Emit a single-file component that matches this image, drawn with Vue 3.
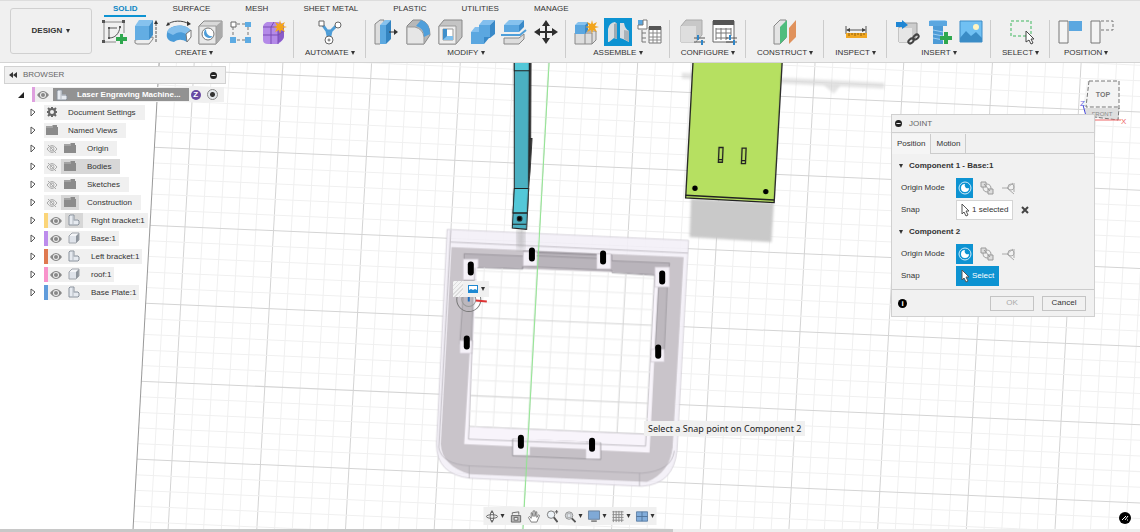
<template>
  <div class="app">
    <!-- icon sprite -->
    <svg class="sprite" aria-hidden="true">
      <symbol id="i-sketch" viewBox="0 0 28 28">
        <g fill="none" stroke="#888"><path d="M4 4H24V15M4 4V24H16" /><path d="M9 20V10h8M9 20c6 0 10-4 11-11" stroke="#555" /></g>
        <path d="M2 2h3v3h-3zM22 2h3v3h-3zM2 22h3v3h-3zM8 9h2v2h-2zM19 8h2v2h-2zM8 19h2v2h-2z" fill="#555" />
        <path d="M20 16h3v3h4v4h-4v3h-3v-3h-4v-4h4z" fill="#2fa84f" />
      </symbol>
      <symbol id="i-extrude" viewBox="0 0 28 28">
        <path d="M3 22v3l2 1h12l4-5v-2z" fill="#eee" stroke="#888" />
        <path d="M3 8h14v14h-14z" fill="#63ade3" /><path d="M3 8l4-6h14l-4 6z" fill="#86c2ee" /><path d="M17 8l4-6v15l-4 5z" fill="#3f8fca" />
        <path d="M24 24V5" stroke="#555" stroke-dasharray="3 1" /><path d="M22 6l2-4 2 4z" fill="#333" />
      </symbol>
      <symbol id="i-revolve" viewBox="0 0 28 28">
        <path d="M3 15C4 7 21 4 27 13l-4 11c-5-3-9-3-13 0C4 23 2 20 3 15z" fill="#4a9bd8" />
        <path d="M3 14C5 7 21 5 27 12l-5 4c-5-3-9-2-13 1z" fill="#83bfec" />
        <path d="M22 16l5-4v7l-4 5z" fill="#fff" stroke="#777" />
        <path d="M3 7C8 2 19 2 25 6" fill="none" stroke="#444" /><path d="M2 8l2-4 2 3zM23 3l4 3-4 2z" fill="#333" />
      </symbol>
      <symbol id="i-hole" viewBox="0 0 28 28">
        <path d="M3 8l5-5h18v16l-6 7H3z" fill="#d9d9d9" stroke="#888" /><path d="M20 8l6-5v16l-6 7z" fill="#aaa" />
        <path d="M3 8h17v18H3z" fill="#e8e8e8" stroke="#999" />
        <circle cx="12" cy="16" r="6" fill="#fff" stroke="#777" /><path d="M10 11a5 5 0 1 0 7 7c-4 1-7-2-7-7z" fill="#4c9cd8" />
      </symbol>
      <symbol id="i-pattern" viewBox="0 0 28 28">
        <path d="M9 6h8M5 9v9M9 22h8M20 9v9" stroke="#777" stroke-dasharray="3 2" />
        <path d="M3 4h5v5H3z" fill="#fff" stroke="#666" /><path d="M17 4h6v5h-6zM2 19h6v6H2zM17 19h6v6h-6z" fill="#5dabe3" />
      </symbol>
      <symbol id="i-form" viewBox="0 0 28 28">
        <path d="M3 9q0-3 4-5h10q6 0 7 5v9q0 4-6 8H8q-5 0-5-4z" fill="#b48ae8" />
        <path d="M18 10l6-3v11q0 4-6 7z" fill="#8a5cc9" />
        <path d="M11 9v17M3 17h15l6-4M3 9h15v17M11 9l3-5" stroke="#7a4db5" fill="none" />
        <use href="#i-star" />
      </symbol>
      <symbol id="i-star" viewBox="0 0 28 28"><path d="M20 2l1 4 4-2-2 4 4 1-4 1 2 4-4-2-1 4-1-4-4 2 2-4-4-1 4-1-2-4 4 2z" fill="#f2a51c" /></symbol>
      <symbol id="i-automate" viewBox="0 0 28 28">
        <path d="M6 6l5 7h4l6-6M11 13l2 9 2-9" fill="none" stroke="#4d9cd6" stroke-width="3" stroke-linejoin="round" />
        <path d="M3 3h5v5H3z" fill="#fff" stroke="#666" /><circle cx="22" cy="7" r="3" fill="#fff" stroke="#666" /><circle cx="13" cy="22" r="4" fill="#fff" stroke="#666" /><circle cx="13" cy="22" r="1" stroke="#666" fill="none" />
      </symbol>
      <symbol id="i-press" viewBox="0 0 28 28">
        <path d="M3 6l5-4h4v20l-4 4H3z" fill="#ddd" stroke="#888" /><path d="M8 7h6v19H8z" fill="#5ba8e0" /><path d="M8 7l5-5h6l-5 5z" fill="#86c2ee" /><path d="M14 7l5-5v19l-5 5z" fill="#3484c1" />
        <path d="M17 14h6" stroke="#333" /><path d="M22 11l4 3-4 3z" fill="#333" />
      </symbol>
      <symbol id="i-fillet" viewBox="0 0 28 28">
        <path d="M3 8l6-6h8q9 3 9 15l-6 9H3z" fill="#b8b8b8" stroke="#888" /><path d="M3 9h8q8 2 9 10v7H3z" fill="#e6e6e6" stroke="#999" />
        <path d="M12 8l5-6q9 3 9 14l-6 3Q20 10 12 8z" fill="#4f9fdb" />
      </symbol>
      <symbol id="i-shell" viewBox="0 0 28 28">
        <path d="M3 8l5-6h18v17l-6 7H3z" fill="#c4c4c4" stroke="#888" /><path d="M3 8h17v18H3z" fill="#eee" stroke="#999" />
        <path d="M7 11h10v11H7z" fill="#fff" stroke="#999" /><path d="M7 11h4v8l-4 3z" fill="#3f8fcb" /><path d="M7 22l4-4h6v4z" fill="#7fc0ee" />
      </symbol>
      <symbol id="i-combine" viewBox="0 0 28 28">
        <path d="M3 14h8V7h11v12h-6v7H3z" fill="#5ba7e0" /><path d="M3 14l4-5h4v5zM11 7l4-5h12l-5 5z" fill="#83bfee" /><path d="M22 7l5-5v14l-5 4h-1l-5 6v-7h6z" fill="#3989c8" />
      </symbol>
      <symbol id="i-split" viewBox="0 0 28 28">
        <path d="M4 7h15v7H4z" fill="#5ba7e0" /><path d="M4 7l5-5h15l-5 5z" fill="#86c2ee" /><path d="M19 7l5-5v7l-5 5z" fill="#3989c8" />
        <path d="M1 17h19l6-5" fill="none" stroke="#4f9fd9" stroke-width="2" /><path d="M4 20h15l5-4v5l-5 5H4z" fill="#ddd" stroke="#888" />
      </symbol>
      <symbol id="i-move" viewBox="0 0 28 28"><path d="M14 2l4 6h-3v5h5v-3l6 4-6 4v-3h-5v5h3l-4 6-4-6h3v-5H8v3l-6-4 6-4v3h5V8h-3z" fill="#2e2e2e" /></symbol>
      <symbol id="i-newcomp" viewBox="0 0 28 28">
        <path d="M3 15l3-2h18v9l-4 4H3z" fill="#ddd" stroke="#888" /><path d="M13 15v11M3 15h17v11" stroke="#888" fill="none" />
        <path d="M3 7h10v9H3z" fill="#5ba7e0" /><path d="M3 7l3-3h10l-3 3z" fill="#86c2ee" /><path d="M13 7l3-3v8l-3 4z" fill="#3989c8" /><use href="#i-star" />
      </symbol>
      <symbol id="i-joint" viewBox="0 0 28 28">
        <path d="M4 11q1-6 7-7l2 2v15l-3-1-5 4H4z" fill="#d9dde0" /><path d="M10 6l3-1v16l-3-1z" fill="#9eaab2" /><path d="M16 5l4 0q1 6 5 8v11l-6-3-3-1z" fill="#d9dde0" /><path d="M20 12l5 1v11l-5-3z" fill="#aab3b9" />
      </symbol>
      <symbol id="i-asbuilt" viewBox="0 0 28 28">
        <path d="M2 2h5v5H2z" fill="#5ba7e0" /><path d="M7 2h4v9H2V7h5z" fill="#fff" stroke="#777" /><path d="M6 12v12M6 15h4M6 20h4M6 24h4" stroke="#777" fill="none" />
        <path d="M13 9h12v16H13z" fill="#fff" stroke="#777" /><path d="M13 8h12v4H13z" fill="#555" /><path d="M13 15h12M13 19h12M13 22h12M17 12v13M21 12v13" stroke="#888" />
      </symbol>
      <symbol id="i-config" viewBox="0 0 28 28">
        <path d="M3 8l5-6h16v15l-6 7H3z" fill="#c8c8c8" stroke="#aaa" /><path d="M3 8h15v16H3z" fill="#dedede" /><use href="#i-sliders" />
      </symbol>
      <symbol id="i-sliders" viewBox="0 0 28 28"><path d="M16 20h11M16 24h11" stroke="#555" /><path d="M20 17v5M24 22v5" stroke="#2f86c8" stroke-width="2" /></symbol>
      <symbol id="i-table" viewBox="0 0 28 28">
        <path d="M3 3h21v21H3z" fill="#fff" stroke="#666" /><path d="M3 2h21v5H3z" fill="#555" /><path d="M6 11h15M6 15h15M6 20h12M6 10v12M11 10v12M16 10v12M21 10v8" stroke="#777" /><use href="#i-sliders" />
      </symbol>
      <symbol id="i-construct" viewBox="0 0 28 28">
        <path d="M3 8l6-6h6v18l-6 6H3z" fill="#e4e4e4" stroke="#888" /><path d="M9 9l7-7v17l-7 7z" fill="#50bd7d" /><path d="M18 10l7-8v17l-7 7z" fill="#e0925c" />
      </symbol>
      <symbol id="i-inspect" viewBox="0 0 28 28">
        <path d="M4 8v8M24 8v8M5 12h18" stroke="#555" /><path d="M4 12l4-2v4zM24 12l-4-2v4z" fill="#444" /><path d="M4 15h21v5H4z" fill="#f1a722" /><path d="M7 15v3M10 15v2M13 15v3M16 15v2M19 15v3M22 15v2" stroke="#8d5e0c" />
      </symbol>
      <symbol id="i-insert" viewBox="0 0 28 28">
        <path d="M6 9l5-4h13v12l-5 7H6z" fill="#ccc" stroke="#999" /><path d="M6 10h13v14H6z" fill="#e6e6e6" /><path d="M3 4h6V2l6 5-6 4V9H3z" fill="#1f86d4" />
        <g fill="none" stroke="#444" stroke-width="2"><ellipse cx="18" cy="23" rx="3" ry="2" transform="rotate(-40 18 23)" /><ellipse cx="23" cy="19" rx="3" ry="2" transform="rotate(-40 23 19)" /></g>
      </symbol>
      <symbol id="i-fastener" viewBox="0 0 28 28">
        <path d="M4 3h18v5H4z" fill="#5ba7e0" /><path d="M4 3l2-1h14l2 1z" fill="#9ccdf2" /><path d="M8 8h10v18H8z" fill="#4d9bd6" /><path d="M8 12l10 2M8 16l10 2M8 20l10 2" stroke="#9ccdf2" /><path d="M19 14h4v4h4v4h-4v4h-4v-4h-4v-4h4z" fill="#2fa84f" />
      </symbol>
      <symbol id="i-image" viewBox="0 0 28 28">
        <path d="M3 3h22v21H3z" fill="#70c0f3" stroke="#3d8cc7" /><path d="M3 20l6-7 5 5 5-4 6 6v4H3z" fill="#3a8cc6" /><circle cx="19" cy="9" r="3" fill="#fff4c2" />
      </symbol>
      <symbol id="i-select" viewBox="0 0 28 28">
        <path d="M4 3h20v15H4z" fill="none" stroke="#3fb75f" stroke-dasharray="3 2" /><path d="M19 13v11l3-2 2 4 2-1-2-4h3z" fill="#fff" stroke="#444" />
      </symbol>
      <symbol id="i-capture" viewBox="0 0 28 28"><path d="M13 3h13v10H13z" fill="#5ba7e0" /><path d="M3 3h9v22H3z" fill="#f4f4f4" stroke="#777" /></symbol>
      <symbol id="i-revert" viewBox="0 0 28 28"><path d="M13 3h12v9H13" fill="none" stroke="#777" stroke-dasharray="3 2" /><path d="M3 3h9v22H3z" fill="#f4f4f4" stroke="#777" /></symbol>

      <symbol id="i-eye" viewBox="0 0 12 12"><path d="M0 6q6-8 12 0-6 8-12 0z" fill="#888" /><circle cx="6" cy="6" r="3" fill="#eee" /><circle cx="6" cy="6" r="2" fill="#888" /></symbol>
      <symbol id="i-hidden" viewBox="0 0 12 12"><g fill="none" stroke="#aaa"><path d="M1 6q5-7 10 0-5 7-10 0z" /><circle cx="6" cy="6" r="2" /><path d="M2 2l8 8" /></g></symbol>
      <symbol id="i-folder" viewBox="0 0 12 12"><path d="M0 2h6l1-1h4v2h1v8H0z" fill="#8b8b8b" /><path d="M0 3h7" stroke="#bbb" /></symbol>
      <symbol id="i-gear" viewBox="0 0 12 12"><circle cx="6" cy="6" r="3" fill="none" stroke="#666" stroke-width="2" /><path d="M6 1v2M6 9v2M1 6h2M9 6h2M2 2l2 2M8 8l2 2M10 2l-2 2M2 10l2-2" stroke="#666" stroke-width="2" /></symbol>
      <symbol id="i-comp" viewBox="0 0 12 12"><path d="M1 2l1-1h4v5h4l1 1v3l-1 1H1z" fill="#e6eaf0" stroke="#8a929c" /><path d="M5 2v9M5 6h5" stroke="#b4bac2" /></symbol>
      <symbol id="i-body" viewBox="0 0 12 12"><path d="M1 4l3-3h7v7l-3 3H1z" fill="#8f969e" /><path d="M1 4h7v7H1z" fill="#dfe3ea" /><path d="M1 4l3-3h7L8 4z" fill="#f4f5f8" /><path d="M1 4l3-3h7v7l-3 3H1z" fill="none" stroke="#a0a5ac" /></symbol>

      <symbol id="i-simple" viewBox="0 0 14 14"><circle cx="7" cy="7" r="6" fill="none" stroke="#cdeafa" /><path d="M7 3a4 4 0 1 0 4 4 3 3 0 0 1-4-4z" fill="#fff" /></symbol>
      <symbol id="i-between" viewBox="0 0 14 14"><g stroke="#999" fill="#ddd"><path d="M1 1h5v5H1zM8 8h5v5H8z" /><path d="M6 3c4 0 5 2 5 5M3 6c0 4 2 5 5 5M4 3l6 7" fill="none" /></g></symbol>
      <symbol id="i-twoedge" viewBox="0 0 14 14"><g stroke="#aaa" fill="none"><path d="M0 7h5l6-5M5 7l7 6M12 2v9" /><circle cx="9" cy="6" r="3" /></g></symbol>
      <symbol id="i-cursor" viewBox="0 0 14 14"><path d="M4 1v10l2-2 2 4 2-1-2-4h3z" fill="#fff" stroke="#555" /></symbol>

      <symbol id="i-orbit" viewBox="0 0 14 14"><g fill="none" stroke="#666"><ellipse cx="7" cy="7" rx="6" ry="2" /><ellipse cx="7" cy="7" rx="2" ry="5" /></g><path d="M5 3l2-3 2 3zM5 11l2 3 2-3z" fill="#666" /></symbol>
      <symbol id="i-look" viewBox="0 0 14 14"><path d="M2 6h10v7H2z" fill="#bbb" stroke="#666" /><path d="M3 5V3l7-1v3M5 8h4v3H5z" fill="#eee" stroke="#666" /></symbol>
      <symbol id="i-pan" viewBox="0 0 14 14"><path d="M4 13L1 8l1-1 2 2V3h1l1 4V1h2v6l1-5h1v6l2-3 1 1-3 7z" fill="#fff" stroke="#777" /></symbol>
      <symbol id="i-zoom" viewBox="0 0 14 14"><circle cx="6" cy="5" r="4" fill="#edf3f8" stroke="#777" /><path d="M9 8l4 5" stroke="#555" stroke-width="2" /><path d="M10 2h4M12 0v4" stroke="#555" /></symbol>
      <symbol id="i-zoomwin" viewBox="0 0 14 14"><circle cx="6" cy="6" r="4" fill="#e3e9ee" stroke="#888" /><path d="M4 4h4v4H4z" fill="none" stroke="#aaa" /><path d="M9 9l4 4" stroke="#555" stroke-width="2" /></symbol>
      <symbol id="i-display" viewBox="0 0 14 14"><path d="M1 1h12v9H1z" fill="#7fa9d6" stroke="#687f9b" /><path d="M4 11h6v2H4z" fill="#888" /></symbol>
      <symbol id="i-grid" viewBox="0 0 14 14"><path d="M1 2h12M1 5h12M1 8h12M1 11h12M2 1v12M5 1v12M8 1v12M11 1v12" stroke="#888" /></symbol>
      <symbol id="i-views" viewBox="0 0 14 14"><path d="M1 2h12v10H1z" fill="#82addb" stroke="#5d7fa5" /><path d="M7 2v10M1 7h12" stroke="#4f7298" /></symbol>
    </svg>

    <header class="ribbon">
      <button class="workspace">DESIGN <i class="caret"></i></button>
      <div class="ribbon-main">
        <nav class="tabs">
          <button v-for="tab in tabs" :key="tab" class="tab" :class="{ active: tab === activeTab }" @click="activeTab = tab">{{ tab }}</button>
        </nav>
        <div class="groups">
          <div v-for="group in groups" :key="group.label" class="group" :class="'count-' + group.icons.length">
            <div class="tools">
              <button v-for="icon in group.icons" :key="icon" class="tool" :class="{ active: icon === 'joint' }" :aria-label="icon">
                <svg><use :href="'#i-' + icon" /></svg>
              </button>
            </div>
            <button class="group-label">{{ group.label }} <i class="caret"></i></button>
          </div>
        </div>
      </div>
    </header>

    <main class="canvas">
      <svg class="scene" viewBox="0 63 1140 465" preserveAspectRatio="xMidYMin slice">
        <defs>
          <clipPath id="floor"><path d="M160 63H1140V528H134z" /></clipPath>
          <clipPath id="hole"><path d="M477 267L523 269 612 272 654 275 647 433 469 426z" /></clipPath>
          <filter id="soft"><feGaussianBlur stdDeviation="3" /></filter>
        </defs>
        <g clip-path="url(#floor)">
          <line v-for="l in gridLines" :key="l.id" :x1="l.x1" :y1="l.y1" :x2="l.x2" :y2="l.y2" :stroke="l.major ? '#d4d4d4' : '#f0f0f0'" />
        </g>
        <path d="M160 63L134 528" stroke="#999" />

        <!-- roof and its shadow -->
        <g transform="translate(480 60) scale(.33333)">
          <g filter="url(#soft)" fill="#c9c9c9">
            <path d="M632 415L880 428 873 545 628 530z" /><path d="M605 38L1210 68V86L605 56z" opacity=".5" /><path d="M1030 76h50l-20 25z" opacity=".5" />
          </g>
          <g stroke="#222" stroke-width="4">
            <path d="M638 5H905L881 427 616 413z" fill="#b6e061" />
            <path d="M616 405L881 419" /><path d="M716 262h12l-2 44h-12zM785 264h12l-2 46h-12zM714 298h12M783 301h12" fill="none" />
          </g>
          <circle cx="644" cy="384" r="8" /><circle cx="856" cy="394" r="8" />
        </g>

        <!-- base -->
        <g transform="translate(430 220) scale(.33333)" fill="none" stroke-width="2">
          <path d="M52 27L775 60 740 690Q730 790 635 796L120 772Q20 760 20 670z" fill="#f3eff7" fill-opacity=".9" stroke="#c8c3cc" />
          <path d="M65 80L760 110 727 680Q718 755 650 783L120 760Q36 735 33 670z" fill="#c9c4ca" />
          <path d="M63 65L773 98M63 30L27 680Q35 730 120 735L635 757Q725 750 732 690M118 735V772M628 757V795" stroke="#aaa5ad" />
          <path d="M103 100L280 107V92L545 103V121L718 128 714 165 545 157V150L278 138V146L103 140z" fill="#b9b4bb" stroke="#8d8990" />
          <path d="M135 140L278 146 545 157 685 165 658 695 103 670z" fill="#f8f4fb" />
          <path d="M103 180H130L125 370H90zM685 200H711L702 398H674z" fill="#bdb8be" stroke="#959198" />
          <path d="M100 116h45v62h-45zM90 360h40v38H90zM280 94h42v42h-42zM500 100h42v45h-42zM674 140h44v60h-44zM662 386h40v38h-40z" fill="#f5f1f8" stroke="#d0cbd3" />
          <path d="M248 655L512 666V716L248 705z" fill="#c5c0c6" stroke="#8f8b92" /><path d="M250 655h50v48h-50zM468 665h42v48h-42zM300 655l168 8v22l-168-7z" fill="#f5f1f8" />
          <path d="M142 142L278 146 545 155 673 165 650 640 118 617z" fill="#fff" />
          <path d="M118 617L650 640M116 655L646 676M118 617L116 655M135 142L118 617M673 165L646 676" stroke="#a7a3aa" />
          <path d="M278 140V146L142 142M545 157L673 165" stroke="#8c8890" />
          <path d="M320 97L500 104M320 106L500 114" stroke="#8d8990" />
        </g>
        <g clip-path="url(#hole)">
          <line v-for="l in gridLines" :key="l.id" :x1="l.x1" :y1="l.y1" :x2="l.x2" :y2="l.y2" :stroke="l.major ? '#d4d4d4' : '#ececec'" />
        </g>
        <path d="M549 63L523 528" stroke="#8be88b" />
        <path d="M517 229h8l-1 20h-6z" fill="#888" opacity=".5" filter="url(#soft)" />
        <rect v-for="s in slots" :key="s.join()" :x="s[0] - 3" :y="s[1] - 7" width="6" height="14" rx="3" fill="#000" />
        <g fill="none" stroke="#777"><circle cx="469" cy="299" r="12" /><circle cx="469" cy="299" r="7" stroke="#999" /></g>
        <path d="M469 296v5" stroke="#1f6fc0" stroke-width="2" /><path d="M476 300l11 1" stroke="#d33" stroke-width="2" />

        <!-- bracket -->
        <g transform="translate(480 60) scale(.33333)" stroke="#222" stroke-width="3">
          <path d="M148 5h5l-1 230h4l-6 100-8 80z" fill="#333" />
          <path d="M103 5H148L146 385 140 507 97 503 103 385z" fill="#4bb0c2" />
          <path d="M103 5H148V32H103zM103 385H146L142 458H99z" fill="#53c8d8" /><path d="M99 458H142M98 492H140" />
          <circle cx="119" cy="475" r="7" fill="#000" />
        </g>
      </svg>

      <svg class="viewcube" viewBox="0 0 50 50">
        <path d="M6 7h33l-1 27-36-1z" fill="#f4f4f4" /><path d="M3 34h35v12l-32-3z" fill="#dedede" />
        <path d="M8 7h30v29M8 7L5 33h33M6 42l31 4 1-12" fill="none" stroke="#777" stroke-dasharray="4 2" />
        <path d="M5 42L2 31" stroke="#4444d8" /><path d="M8 46h32" stroke="#e66" />
        <text x="22" y="23" text-anchor="middle" class="cube-top">TOP</text><text x="21" y="42" text-anchor="middle" class="cube-front">FRONT</text>
        <text x="-1" y="32" fill="#6a6ae0" class="cube-axis">Z</text><text x="40" y="50" fill="#e66" class="cube-axis">X</text>
      </svg>

      <aside class="browser">
        <div class="browser-head"><svg class="rewind" viewBox="0 0 8 6"><path d="M4 0v6L0 3zM8 0v6L4 3z" fill="#333" /></svg>BROWSER<button class="collapse" aria-label="Collapse browser"></button></div>
        <ul class="tree">
          <li class="row root">
            <svg class="open" viewBox="0 0 6 6"><path d="M6 0v6H0z" fill="#222" /></svg>
            <div class="item">
              <i class="stripe pink"></i><svg class="ic"><use href="#i-eye" /></svg>
              <span class="root-name"><svg class="ic"><use href="#i-comp" /></svg><b>Laser Engraving Machine...</b></span>
              <span class="badge">Z</span>
              <input class="radio" type="radio" checked aria-label="Activate component" />
            </div>
          </li>
          <li v-for="node in nodes" :key="node.name" class="row">
            <svg class="arrow" viewBox="0 0 6 9"><path d="M1 1l4 3-4 4z" fill="#fff" stroke="#555" /></svg>
            <div class="item" :class="{ plain: !node.eye, striped: node.stripe }">
              <i v-if="node.stripe" class="stripe" :class="node.stripe"></i>
              <svg v-if="node.eye" class="ic"><use :href="'#i-' + node.eye" /></svg>
              <span class="node-icon" :class="{ shade: node.shade }"><svg class="ic"><use :href="'#i-' + node.icon" /></svg></span>
              <span class="name" :class="{ shade: node.shade === 'all' }">{{ node.name }}</span>
            </div>
          </li>
        </ul>
      </aside>

      <section class="joint">
        <h2 class="joint-head"><button class="collapse" aria-label="Collapse joint"></button>JOINT</h2>
        <div class="joint-tabs"><button class="joint-tab active">Position</button><button class="joint-tab">Motion</button></div>
        <div class="joint-body">
          <template v-for="part in parts" :key="part.title">
            <h3><i class="caret"></i>{{ part.title }}</h3>
            <div class="field">
              <span class="field-label">Origin Mode</span>
              <button v-for="(mode, i) in modes" :key="mode" class="mode" :class="{ active: i === 0 }" :aria-label="mode"><svg><use :href="'#i-' + mode" /></svg></button>
            </div>
            <div class="field">
              <span class="field-label">Snap</span>
              <button class="snap" :class="{ active: !part.selected }"><svg><use href="#i-cursor" /></svg>{{ part.selected ? '1 selected' : 'Select' }}</button>
              <button v-if="part.selected" class="clear" aria-label="Clear"><svg viewBox="0 0 8 8"><path d="M1 1l6 6M7 1L1 7" stroke="#444" stroke-width="2" /></svg></button>
            </div>
          </template>
        </div>
        <footer class="joint-foot"><span class="info">i</span><button class="btn" disabled>OK</button><button class="btn">Cancel</button></footer>
      </section>

      <div class="mini-bar">
        <i class="grip"></i><svg viewBox="0 0 10 8"><path d="M0 0h10v8H0z" fill="#1d88d2" /><path d="M1 1h8v4L7 4 5 5 3 4 1 5z" fill="#fff" /></svg><i class="caret"></i>
      </div>
      <div class="tooltip">Select a Snap point on Component 2</div>

      <div class="navbar">
        <button v-for="n in navTools" :key="n.icon" class="nav-tool" :aria-label="n.icon"><svg><use :href="'#i-' + n.icon" /></svg><i v-if="n.menu" class="caret"></i></button>
      </div>
      <button class="assistant" aria-label="Assistant"><svg viewBox="0 0 12 12"><circle cx="6" cy="6" r="6" /><path d="M3 8l4-4M6 8l3-4M8 8h1" stroke="#fff" fill="none" /></svg></button>
    </main>
    <div class="timeline"><div class="progress"></div></div>
  </div>
</template>

<script setup>
import { ref } from 'vue'

const tabs = ['SOLID', 'SURFACE', 'MESH', 'SHEET METAL', 'PLASTIC', 'UTILITIES', 'MANAGE']
const activeTab = ref('SOLID')

const groups = [
  { label: 'CREATE', icons: ['sketch', 'extrude', 'revolve', 'hole', 'pattern', 'form'] },
  { label: 'AUTOMATE', icons: ['automate'] },
  { label: 'MODIFY', icons: ['press', 'fillet', 'shell', 'combine', 'split', 'move'] },
  { label: 'ASSEMBLE', icons: ['newcomp', 'joint', 'asbuilt'] },
  { label: 'CONFIGURE', icons: ['config', 'table'] },
  { label: 'CONSTRUCT', icons: ['construct'] },
  { label: 'INSPECT', icons: ['inspect'] },
  { label: 'INSERT', icons: ['insert', 'fastener', 'image'] },
  { label: 'SELECT', icons: ['select'] },
  { label: 'POSITION', icons: ['capture', 'revert'] }
]

const nodes = [
  { name: 'Document Settings', icon: 'gear' },
  { name: 'Named Views', icon: 'folder' },
  { name: 'Origin', icon: 'folder', eye: 'hidden' },
  { name: 'Bodies', icon: 'folder', eye: 'hidden', shade: 'all' },
  { name: 'Sketches', icon: 'folder', eye: 'hidden' },
  { name: 'Construction', icon: 'folder', eye: 'hidden', shade: 'icon' },
  { name: 'Right bracket:1', icon: 'comp', eye: 'eye', stripe: 'yellow', shade: 'icon' },
  { name: 'Base:1', icon: 'body', eye: 'eye', stripe: 'purple' },
  { name: 'Left bracket:1', icon: 'comp', eye: 'eye', stripe: 'orange' },
  { name: 'roof:1', icon: 'body', eye: 'eye', stripe: 'rose' },
  { name: 'Base Plate:1', icon: 'comp', eye: 'eye', stripe: 'blue' }
]

const modes = ['simple', 'between', 'twoedge']

const parts = [
  { title: 'Component 1 - Base:1', selected: true },
  { title: 'Component 2', selected: false }
]

const navTools = [
  { icon: 'orbit', menu: true },
  { icon: 'look' },
  { icon: 'pan' },
  { icon: 'zoom' },
  { icon: 'zoomwin', menu: true },
  { icon: 'display', menu: true },
  { icon: 'grid', menu: true },
  { icon: 'views', menu: true }
]

const slots = [[532, 254], [603, 257], [471, 268], [662, 277], [467, 342], [658, 351], [521, 441], [592, 444]]

// ground grid, every fifth line is a major one
function buildGrid() {
  const lines = []
  for (let i = -2; i < 60; i++) {
    const x = 195 + i * 17.7
    lines.push({ id: 'v' + i, x1: x, y1: 63, x2: x - 26, y2: 528, major: i % 5 === 0 })
  }
  for (let i = -5; i < 32; i++) {
    const y = 69 + i * 15.6
    lines.push({ id: 'h' + i, x1: 130, y1: y - 1, x2: 1140, y2: y + 43, major: i % 5 === 0 })
  }
  return lines
}

const gridLines = buildGrid()
</script>

<style>
body {
  margin: 0;
}
</style>

<style scoped>
.app {
  display: flex;
  flex-direction: column;
  min-height: 100vh;
  background: #fff;
  color: #333;
  font: 8px/12px "Liberation Sans", Arial, sans-serif;
}

button {
  padding: 0;
  border: 0;
  background: none;
  color: inherit;
  font: inherit;
}

.sprite {
  position: absolute;
  width: 0;
  height: 0;
}

.caret {
  display: inline-block;
  border: 2px solid transparent;
  border-top: 4px solid #333;
  border-bottom: 0;
}

/* ribbon */
.ribbon {
  display: flex;
  height: 60px;
  padding-top: 1px;
  border-top: 1px solid #ddd;
  border-bottom: 1px solid #d4d4d4;
  background: #f0f0f0;
}

.workspace {
  width: 82px;
  height: 46px;
  margin: 6px 2px 0 10px;
  border: 1px solid #d0d0d0;
  border-radius: 3px;
  font-weight: bold;
}

.workspace .caret {
  margin-left: 2px;
}

.tabs {
  display: flex;
  gap: 17px;
  padding-left: 10px;
}

.tab {
  height: 15px;
  padding: 0 9px;
  border-bottom: 2px solid transparent;
}

.tab.active {
  border-color: #0d93d2;
  color: #0d86c4;
  font-weight: bold;
}

.groups {
  display: flex;
  padding-top: 1px;
}

.group {
  display: flex;
  flex-direction: column;
  align-items: center;
  padding: 0 4px;
  background: linear-gradient(#ccc, #ccc) right 2px / 1px 38px no-repeat;
}

.group:last-child {
  background: none;
}

.count-1 {
  padding: 0 11px;
}

.count-2 {
  padding: 0 6px;
}

.count-2:last-child {
  padding: 0 4px;
}

.tools {
  display: flex;
}

.tool {
  width: 28px;
  height: 28px;
  margin: 0 2px;
}

.tool svg {
  display: block;
  width: 28px;
  height: 28px;
}

.tool.active {
  background: #0d93d2;
}

.group-label {
  height: 14px;
  white-space: nowrap;
}

/* canvas */
.canvas {
  position: relative;
  display: flex;
  flex: 1;
  justify-content: space-between;
  align-items: flex-start;
  min-height: 440px;
}

.scene {
  position: absolute;
  width: 100%;
  height: 100%;
}

.viewcube {
  position: absolute;
  top: 11px;
  right: 9px;
  width: 50px;
  height: 50px;
  overflow: visible;
}

.cube-top {
  fill: #777;
  font-size: 7px;
  font-weight: bold;
}

.cube-front {
  fill: #888;
  font-size: 6px;
}

.cube-axis {
  font-size: 8px;
}

.collapse {
  width: 7px;
  height: 7px;
  border: 3px solid #222;
  border-width: 3px 1px;
  border-radius: 50%;
  background: #fff;
}

.browser {
  position: relative;
  width: 222px;
  margin: 3px 0 0 4px;
}

.browser-head {
  display: flex;
  align-items: center;
  height: 16px;
  padding: 0 8px 0 4px;
  border: 1px solid #d2d2d2;
  background: #f0f0f0;
  color: #666;
}

.browser-head .collapse {
  margin-left: auto;
}

.rewind {
  width: 8px;
  height: 6px;
  margin-right: 6px;
}

.tree {
  display: grid;
  gap: 3px;
  margin: 3px 0 0;
  padding: 0;
  list-style: none;
  white-space: nowrap;
}

.row {
  display: flex;
  align-items: center;
  height: 15px;
  padding-left: 26px;
}

.root {
  padding-left: 14px;
}

.arrow {
  width: 6px;
  height: 9px;
  margin-right: 8px;
}

.open {
  width: 6px;
  height: 6px;
  margin-right: 8px;
}

.item {
  display: flex;
  align-items: center;
  height: 15px;
  padding-left: 2px;
  background: #f0f0f0;
}

.root .item,
.striped {
  padding-left: 0;
}

.stripe {
  width: 4px;
  height: 15px;
  margin-right: 2px;
}

.pink { width: 3px; background: #dfa0df; }
.yellow { background: #fbd579; }
.purple { background: #bd8cec; }
.orange { background: #df7950; }
.rose { background: #f893cb; }
.blue { background: #619cdb; }

.ic {
  display: block;
  flex: none;
  width: 12px;
  height: 12px;
}

.node-icon {
  padding: 1px 3px 2px;
  margin-left: 3px;
}

.plain .node-icon {
  padding: 1px 0 2px;
  margin: 0 2px 0 0;
}

.name {
  padding: 2px 9px 1px 8px;
}

.striped .name {
  padding-right: 3px;
}

.shade {
  background: #d7d7d7;
}

.root-name {
  display: flex;
  align-items: center;
  height: 13px;
  margin: 0 2px 0 4px;
  padding: 0 8px 0 3px;
  background: #929292;
  color: #fff;
}

.root-name b {
  padding-left: 9px;
}

.badge {
  width: 10px;
  height: 10px;
  border-radius: 50%;
  background: #6848a3;
  color: #fff;
  font-weight: bold;
  line-height: 10px;
  text-align: center;
}

.radio {
  width: 11px;
  height: 11px;
  margin: 0 6px;
  appearance: none;
  border: 1px solid #888;
  border-radius: 50%;
  background: radial-gradient(#333 0 2px, #e4e8ec 3px);
}

/* joint dialog */
.joint {
  position: relative;
  width: 202px;
  margin: 51px 45px 0 0;
  border: 1px solid #d0d0d0;
  background: #f1f1f1;
}

h2,
h3 {
  margin: 0;
  font-size: 8px;
}

.joint-head {
  display: flex;
  align-items: center;
  gap: 7px;
  height: 17px;
  padding-left: 3px;
  border-bottom: 1px solid #d0d0d0;
  color: #666;
  font-weight: normal;
}

.joint-tabs {
  display: flex;
  height: 19px;
  padding-top: 1px;
  border-bottom: 1px solid #ccc;
}

.joint-tab {
  height: 19px;
  padding: 0 5px;
  border-right: 1px solid #ccc;
}

.joint-tab.active {
  height: 20px;
  background: #f5f5f5;
}

.joint-body {
  padding: 1px 7px 2px;
  border-bottom: 1px solid #ccc;
}

h3 {
  display: flex;
  align-items: center;
  gap: 6px;
  height: 22px;
}

.field {
  display: flex;
  align-items: center;
  height: 22px;
  padding-left: 2px;
}

.field-label {
  width: 55px;
}

.mode {
  width: 17px;
  height: 20px;
  margin-right: 5px;
}

.mode svg,
.snap svg {
  display: block;
  width: 14px;
  height: 14px;
  margin: 0 auto;
}

.mode.active,
.snap.active {
  border-color: #0d93d2;
  background: #0d93d2;
  color: #fff;
}

.snap {
  display: flex;
  align-items: center;
  height: 20px;
  padding: 0 4px 0 1px;
  border: 1px solid #d4d4d4;
  background: #fff;
}

.clear {
  width: 8px;
  height: 8px;
  margin-left: 8px;
}

.clear svg {
  display: block;
}

.joint-foot {
  display: flex;
  align-items: center;
  gap: 8px;
  height: 26px;
  padding: 0 8px 0 6px;
}

.info {
  width: 9px;
  height: 9px;
  margin-right: auto;
  border-radius: 50%;
  background: #000;
  color: #fff;
  font-weight: bold;
  line-height: 9px;
  text-align: center;
}

.btn {
  width: 44px;
  height: 15px;
  border: 1px solid #c4c4c4;
}

.btn:disabled {
  color: #aaa;
}

/* floating bits over the model */
.mini-bar {
  position: absolute;
  top: 218px;
  left: 453px;
  display: flex;
  align-items: center;
  gap: 3px;
  height: 16px;
  padding-right: 4px;
  background: #f0f0f0;
}

.mini-bar svg {
  width: 10px;
  height: 8px;
}

.grip {
  width: 10px;
  height: 16px;
  margin-right: 2px;
  background: repeating-linear-gradient(135deg, #ddd 0 1px, #f4f4f4 1px 3px);
}

.tooltip {
  position: absolute;
  top: 358px;
  left: 644px;
  padding: 1px 4px;
  background: #f0f0f0;
  color: #222;
  font: 9px/13px "Noto Sans", "Open Sans", sans-serif;
  white-space: nowrap;
}

.navbar {
  position: absolute;
  bottom: 4px;
  left: 50%;
  display: flex;
  align-items: center;
  gap: 5px;
  height: 18px;
  padding: 0 2px;
  background: #f0f0f0;
  transform: translateX(-50%);
}

.nav-tool {
  display: flex;
  align-items: center;
  gap: 2px;
}

.nav-tool svg {
  width: 13px;
  height: 13px;
}

.assistant {
  position: absolute;
  right: 9px;
  bottom: 5px;
  width: 12px;
  height: 12px;
}

.assistant svg {
  display: block;
}

.timeline {
  height: 3px;
  background: #eee;
}

.progress {
  width: 59%;
  height: 3px;
  background: #c8c8c8;
}
</style>
